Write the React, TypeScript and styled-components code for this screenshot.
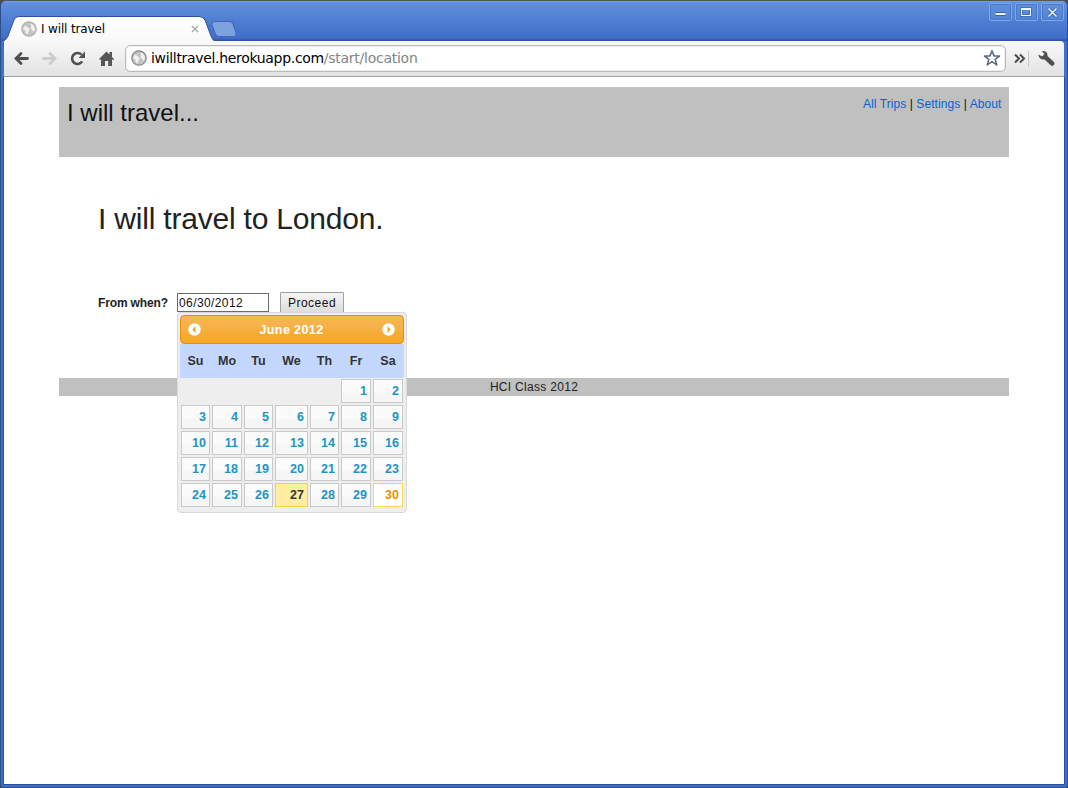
import React from "react";
import styled, { createGlobalStyle } from "styled-components";

const Global = createGlobalStyle`
  * { box-sizing: border-box; }
  body { margin: 0; background: #4a4a4a; overflow: hidden; }
  button { font: inherit; }
`;

const BrowserWindow = styled.div`
  width: 1068px;
  height: 788px;
  display: flex;
  flex-direction: column;
  background: #4170c9;
  border: 1px solid #2c4f8e;
  border-top-color: #565656;
  border-radius: 6px 6px 4px 4px;
  padding: 0 3px 3px;
  font-family: "DejaVu Sans", sans-serif;
  overflow: hidden;
`;

const TitleBar = styled.header`
  height: 40px;
  flex: none;
  margin: 0 -3px;
  padding-left: 3px;
  display: flex;
  align-items: flex-end;
  background: linear-gradient(#73a2e8 0, #6090dc 2px, #4c7bd2 22px, #416fc8 37px, #2c519c 40px);
`;

const Tab = styled.div`
  position: relative;
  width: 212px;
  height: 25px;
  margin-left: -1px;
  flex: none;
  display: flex;
  align-items: center;
  padding: 1px 16px 0 18px;
  font-size: 12px;
  color: #000;
`;

const TabShape = styled.svg`
  position: absolute;
  inset: 0;
`;

const TabTitle = styled.span`
  position: relative;
  margin-left: 4px;
  flex: 1;
  line-height: 16px;
  letter-spacing: -0.15px;
`;

const GlobeIcon = styled.svg`
  position: relative;
  flex: none;
`;

const CloseIcon = styled.svg`
  position: relative;
  flex: none;
`;

const NewTab = styled.svg`
  margin: 0 0 4px -5px;
  flex: none;
  align-self: flex-end;
`;

const WindowButtons = styled.div`
  margin: 2px 3px 0 auto;
  align-self: flex-start;
  display: flex;
  gap: 3px;
`;

const WindowButton = styled.div`
  width: 23px;
  height: 18px;
  display: flex;
  align-items: center;
  justify-content: center;
  border: 1px solid #82a7e6;
  border-radius: 2px;
  box-shadow: inset 0 0 0 1px #4a78cb;
  background: linear-gradient(#6190dc, #5482d4);
`;

const Toolbar = styled.nav`
  height: 36px;
  flex: none;
  display: flex;
  align-items: center;
  border-bottom: 1px solid #a0a0a0;
  border-top-right-radius: 4px;
  background: linear-gradient(#f9f9f9, #e2e2e2);
`;

const NavIcons = styled.div`
  width: 121px;
  display: flex;
`;

const AddressBar = styled.div`
  width: 881px;
  height: 27px;
  display: flex;
  align-items: center;
  border: 1px solid #bbb;
  border-radius: 5px;
  box-shadow: inset 0 0 0 1px #ededed;
  background: #fff;
  padding: 0 4px 1px 5px;
`;

const Url = styled.span`
  flex: 1;
  margin-left: 4px;
  font-size: 14px;
  line-height: 20px;
  letter-spacing: -0.26px;
  color: #848484;
  white-space: nowrap;
  b { font-weight: 400; color: #000; letter-spacing: -0.32px; }
`;

const ToolIcons = styled.div`
  display: flex;
`;

const Viewport = styled.main`
  flex: 1;
  background: #fff;
  box-shadow: 0 0 0 1px #2b4f94;
  padding: 10px 55px 0;
  font-family: "Liberation Sans", Arial, sans-serif;
  font-size: 12px;
  color: #222;
  clip-path: inset(0 -1px -1px -1px);
`;

const SiteHeader = styled.div`
  height: 70px;
  display: flex;
  justify-content: space-between;
  background: #c0c0c0;
  padding: 8px 7.5px 8px 8px;
`;

const SiteTitle = styled.div`
  font-size: 24px;
  line-height: 36px;
  color: #111;
`;

const SiteLinks = styled.div`
  line-height: 18px;
  letter-spacing: 0.08px;
  color: #111;
  a { color: #0863ce; text-decoration: none; }
`;

const Heading = styled.h1`
  margin: 44px 0 0 39px;
  font-size: 30px;
  font-weight: 400;
  line-height: 36px;
  letter-spacing: -0.2px;
`;

const TripForm = styled.form`
  height: 22px;
  margin: 55px 0 0 39px;
  display: flex;
  align-items: flex-start;
`;

const FieldLabel = styled.label`
  width: 79px;
  font-weight: 700;
  line-height: 22px;
  letter-spacing: -0.15px;
  white-space: nowrap;
`;

const DateField = styled.div`
  position: relative;
  width: 92px;
  height: 19px;
  margin-top: 1px;
  border: 1px solid #6c6c6c;
  padding-left: 1px;
  line-height: 18px;
  letter-spacing: 0.4px;
  color: #111;
`;

const ProceedButton = styled.button`
  width: 64px;
  height: 22px;
  margin-left: 11px;
  padding: 0;
  border: 1px solid #a0a0a0;
  border-radius: 1px;
  background: linear-gradient(#f5f5f5, #dcdcdc);
  line-height: 18px;
  letter-spacing: 0.5px;
  color: #111;
`;

const SiteFooter = styled.footer`
  height: 18px;
  margin-top: 64px;
  background: #c0c0c0;
  text-align: center;
  line-height: 18px;
  letter-spacing: 0.3px;
`;

const DatePicker = styled.div`
  position: absolute;
  z-index: 1;
  top: 18px;
  left: -1px;
  width: 230px;
  height: 201px;
  border: 1px solid #d9d9d9;
  border-radius: 4px;
  background: #eee;
  padding: 2px;
  font-size: 12.5px;
  font-weight: 700;
  letter-spacing: 0;
`;

const MonthBar = styled.div`
  height: 29px;
  width: 224px;
  display: flex;
  align-items: flex-start;
  justify-content: space-between;
  padding: 0 8px 0 7px;
  border: 1px solid #e78f08;
  border-radius: 4px;
  background: linear-gradient(#f8b750 0, #f6b046 45%, #f6ab33 65%, #f6a828 100%);
  color: #fff;
  line-height: 28px;
  letter-spacing: 0.4px;
`;

const ArrowIcon = styled.svg`
  margin-top: 7px;
`;

const Grid = styled.div`
  display: grid;
  width: 224px;
  grid-template-columns: 31px 32px 31px 35px 31px 32px 32px;
`;

const WeekHead = styled(Grid)`
  height: 34px;
  background: #c3d7ff;
  color: #333;
  line-height: 34px;
  text-align: center;
`;

const Days = styled(Grid)`
  grid-auto-rows: 26px;
`;

type DayKind = "plain" | "today" | "selected";
const dayLook: Record<DayKind, { edge: string; fill: string; ink: string }> = {
  plain: { edge: "#c9c9c9", fill: "linear-gradient(#fbfbfb 50%, #f6f6f6 65%)", ink: "#1c94c4" },
  today: { edge: "#fed22f", fill: "#ffeda3", ink: "#363636" },
  selected: { edge: "#fbd850", fill: "#fff", ink: "#eb8f00" },
};

const Day = styled.div<{ $kind: DayKind; $col?: number }>`
  margin: 1px;
  padding-right: 3px;
  border: 1px solid ${(p) => dayLook[p.$kind].edge};
  background: ${(p) => dayLook[p.$kind].fill};
  color: ${(p) => dayLook[p.$kind].ink};
  text-align: right;
  line-height: 22px;
  ${(p) => (p.$col ? `grid-column-start: ${p.$col};` : "")}
`;

const Globe = ({ rim = "#b0b0b0" }: { rim?: string }) => (
  <GlobeIcon width="16" height="16" viewBox="0 0 16 16">
    <circle cx="8" cy="8" r="7.2" fill="#c4c4c4" stroke={rim} strokeWidth="1.2" />
    <path d="M2.500 6.500 4 4.800 6.500 6 8.600 8.200 7.500 10.500 6.600 13.600 4.400 11.800 4.600 9.500 2.200 8.500Z M9 2.400 11.500 3.200 13.600 6 14 9 12.500 11 11 8.800 9.400 7.200 10.500 5.200Z" fill="#f2f2f2" />
  </GlobeIcon>
);

const ArrowCircle = ({ next }: { next?: boolean }) => (
  <ArrowIcon width="13" height="13" viewBox="0 0 13 13">
    <circle cx="6.500" cy="6.500" r="6.200" fill="#fff" />
    <path d={next ? "M5.500 3v7l3.200-3.500z" : "M7.500 3v7L4.300 6.500z"} fill="#f3a52a" />
  </ArrowIcon>
);

const weekdays = ["Su", "Mo", "Tu", "We", "Th", "Fr", "Sa"];
const dates = Array.from({ length: 30 }, (_, i) => i + 1);
const kindOf = (d: number): DayKind => (d === 27 ? "today" : d === 30 ? "selected" : "plain");

export default function App() {
  return (
    <>
      <Global />
      <BrowserWindow>
        <TitleBar>
          <Tab>
            <TabShape width="212" height="25" viewBox="0 0 212 25">
              <defs>
                <linearGradient id="tab" x1="0" y1="0" x2="0" y2="1">
                  <stop offset="0" stopColor="#fff" />
                  <stop offset="1" stopColor="#f9f9f9" />
                </linearGradient>
              </defs>
              <path d="M0 25C3 24 4 22 5 20L11 4Q12 .5 16 .5H196Q200 .5 202 4L208 20Q210 25 212 25Z" fill="url(#tab)" />
              <path d="M0 25C3 24 4 22 5 20L11 4Q12 .5 16 .5H196Q200 .5 202 4L208 20Q210 25 212 25" fill="none" stroke="#2d519b" />
            </TabShape>
            <Globe />
            <TabTitle>I will travel</TabTitle>
            <CloseIcon width="8" height="8" viewBox="0 0 8 8">
              <path d="m1 1 6 6M7 1 1 7" stroke="#a9a9a9" strokeWidth="1.4" />
            </CloseIcon>
          </Tab>
          <NewTab width="28" height="16" viewBox="0 0 28 16">
            <path d="M4 .5H20Q22 .5 23 3L26 12Q27 15.500 24 15.500H9Q6.500 15.500 5.500 13L2 4Q1 .5 4 .5Z" fill="#7ea2de" stroke="#3d68b8" />
          </NewTab>
          <WindowButtons>
            <WindowButton><svg width="13" height="11"><path d="M1.500 7h10" stroke="#2f5aa8" strokeWidth="3.600" /><path d="M1.500 7h10" stroke="#eef5ff" strokeWidth="2" /></svg></WindowButton>
            <WindowButton><svg width="13" height="11"><rect x="1.500" y="1.500" width="9" height="7" fill="none" stroke="#2f5aa8" strokeWidth="2.500" /><rect x="1.500" y="1.500" width="9" height="7" fill="none" stroke="#f0f6ff" strokeWidth="1.200" /><path d="M1 2h10" stroke="#f0f6ff" strokeWidth="2" /></svg></WindowButton>
            <WindowButton><svg width="13" height="11"><path d="m2.500 1.500 8 8M10.500 1.500l-8 8" stroke="#2f5aa8" strokeWidth="3" /><path d="m2.500 1.500 8 8M10.500 1.500l-8 8" stroke="#eef5ff" strokeWidth="1.700" /></svg></WindowButton>
          </WindowButtons>
        </TitleBar>

        <Toolbar>
          <NavIcons>
            <svg width="121" height="34" viewBox="4 42 121 34">
              <path d="M27.500 58.500H16.500M21 53.500l-5 5 5 5" fill="none" stroke="#505050" strokeWidth="2.800" strokeLinecap="round" />
              <path d="M43.500 58.500h11M50 53.500l5 5-5 5" fill="none" stroke="#ccc" strokeWidth="2.800" strokeLinecap="round" />
              <path d="M82.200 61.400A5.500 5.500 0 1 1 81.500 54.600" fill="none" stroke="#505050" strokeWidth="2.600" />
              <path d="M85 51.500v6.500h-6.500z" fill="#505050" />
              <path d="m99 59 7.500-7.500L109.500 54.500V52h2.500V57l2.200 2.200-1 1-1.200-1V66h-3.800v-5h-3.200v5h-4v-7l-1 1z" fill="#565656" />
            </svg>
          </NavIcons>
          <AddressBar>
            <Globe rim="#858585" />
            <Url><b>iwilltravel.herokuapp.com</b>/start/location</Url>
            <svg width="18" height="18" viewBox="0 0 18 18">
              <path d="m9 1.700 2 5.200 5.500.1-4.300 3.400 1.600 5.500L9 12.700l-4.800 3.200 1.600-5.500L1.500 7l5.500-.1z" fill="#fff" stroke="#5d6985" strokeWidth="1.600" strokeLinejoin="round" />
            </svg>
          </AddressBar>
          <ToolIcons>
            <svg width="58" height="34" viewBox="1006 42 58 34">
              <path d="m1015 54.500 4 4-4 4M1020 54.500l4 4-4 4" fill="none" stroke="#4b4b4b" strokeWidth="2" />
              <path d="M1028.500 51v16" stroke="#c6c6c6" />
              <path d="M1042 51.200c3-.5 6 1.500 5.500 4.800l6.500 6c1.500 2-1 5-3 3.500l-6.500-6c-3 .5-6-1.500-6-5l3.500 2 2.500-2.500z" fill="#505050" />
            </svg>
          </ToolIcons>
        </Toolbar>

        <Viewport>
          <SiteHeader>
            <SiteTitle>I will travel...</SiteTitle>
            <SiteLinks><a>All Trips</a> | <a>Settings</a> | <a>About</a></SiteLinks>
          </SiteHeader>
          <Heading>I will travel to London.</Heading>
          <TripForm>
            <FieldLabel>From when?</FieldLabel>
            <DateField>
              06/30/2012
              <DatePicker>
                <MonthBar>
                  <ArrowCircle />
                  <span>June 2012</span>
                  <ArrowCircle next />
                </MonthBar>
                <WeekHead>{weekdays.map((d) => <span key={d}>{d}</span>)}</WeekHead>
                <Days>
                  {dates.map((d) => <Day key={d} $kind={kindOf(d)} $col={d === 1 ? 6 : undefined}>{d}</Day>)}
                </Days>
              </DatePicker>
            </DateField>
            <ProceedButton type="button">Proceed</ProceedButton>
          </TripForm>
          <SiteFooter>HCI Class 2012</SiteFooter>
        </Viewport>
      </BrowserWindow>
    </>
  );
}
